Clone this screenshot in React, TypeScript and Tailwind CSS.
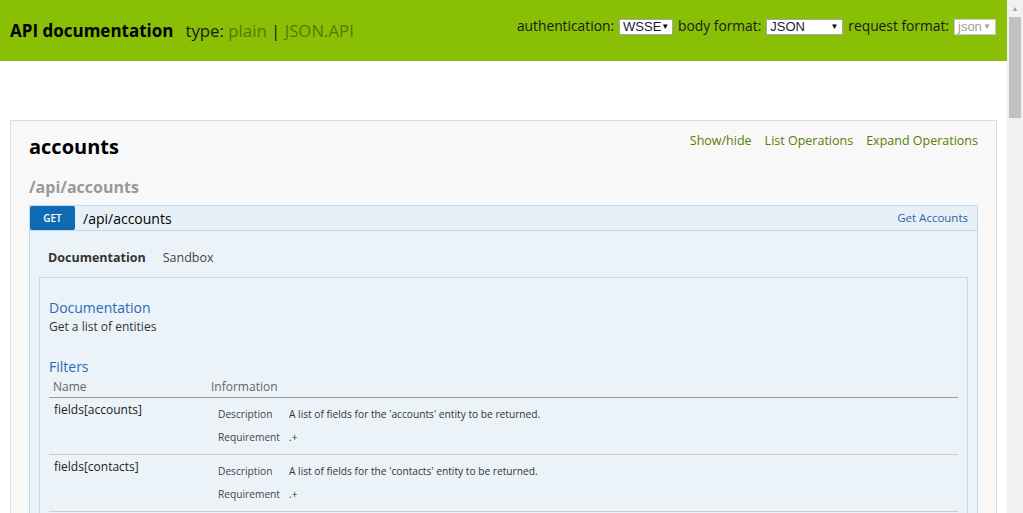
import React from 'react';

type Filter = { name: string; description: string; requirement: string };

const filters: Filter[] = [
  { name: 'fields[accounts]', description: "A list of fields for the 'accounts' entity to be returned.", requirement: '.+' },
  { name: 'fields[contacts]', description: "A list of fields for the 'contacts' entity to be returned.", requirement: '.+' },
];

function FakeSelect({ value, width, disabled }: { value: string; width: string; disabled?: boolean }) {
  return (
    <span
      className={`inline-flex h-[16px] items-center justify-between border bg-white pl-[3px] pr-[4px] font-['Liberation_Sans',Arial,sans-serif] text-[13px] leading-none ${width} ${
        disabled ? 'border-[#c8c8c8] text-[#a0a0a0]' : 'border-[#a6a6a6] text-[#1a1a40]'
      }`}
    >
      <span>{value}</span>
      <span className={`text-[8px] ${disabled ? 'text-[#a0a0a0]' : 'text-black'}`}>▼</span>
    </span>
  );
}

export default function App() {
  return (
    <div className="flex h-[513px] overflow-hidden bg-white font-['Open_Sans',sans-serif] text-[#333]">
      <div className="w-[1007px] shrink-0 overflow-hidden">
        {/* Header */}
        <header className="flex h-[61px] items-center justify-between bg-[#89bf04] pl-[10px] pr-[11px]">
          <div className="flex items-baseline gap-[12px]">
            <h1 className="text-[17px] font-bold text-black">API documentation</h1>
            <div className="text-[16.8px] text-[#1a1a1a]">
              type: <span className="text-[#557a00]">plain</span> | <span className="text-[#557a00]">JSON.API</span>
            </div>
          </div>
          <div className="flex items-center gap-[5px] pb-[8px] text-[13.8px] text-[#1a1a1a]">
            <span>authentication:</span>
            <FakeSelect value="WSSE" width="w-[54px]" />
            <span>body format:</span>
            <FakeSelect value="JSON" width="w-[77px]" />
            <span>request format:</span>
            <FakeSelect value="json" width="w-[42px]" disabled />
          </div>
        </header>

        {/* Resource */}
        <section className="mx-[10px] mt-[59px] border border-[#ddd] bg-[#f8f8f8] px-[18px] pt-[12px]">
          <div className="flex items-start justify-between">
            <h2 className="text-[20px] font-bold leading-[28px] text-black">accounts</h2>
            <ul className="flex gap-[13px] text-[12.5px] leading-[16px] text-[#5a7d00]">
              <li>Show/hide</li>
              <li>List Operations</li>
              <li>Expand Operations</li>
            </ul>
          </div>
          <h3 className="mt-[14px] text-[16px] font-bold leading-[24px] text-[#999]">/api/accounts</h3>

          {/* Operation */}
          <div className="mt-[6px]">
            <div className="flex h-[26px] items-center border border-[#c3d9ec] bg-[#e7f0f7]">
              <span className="flex h-[24px] w-[45px] items-center justify-center rounded-[2px] bg-[#0f6ab4] text-[10px] font-semibold text-white">
                GET
              </span>
              <span className="ml-[8px] text-[14px] text-black">/api/accounts</span>
              <span className="ml-auto pr-[9px] text-[11.5px] text-[#2a64a8]">Get Accounts</span>
            </div>
            <div className="border border-t-0 border-[#c3d9ec] bg-[#ebf3f9] px-[9px] pb-[20px]">
              <div className="flex gap-[17px] pl-[9px] pt-[17px] pb-[9px] text-[12.5px] leading-[20px]">
                <span className="font-bold text-[#333]">Documentation</span>
                <span className="text-[#444]">Sandbox</span>
              </div>
              <div className="border border-[#c3d9ec] px-[9px] pt-[20px] pb-[20px]">
                <h4 className="text-[14px] leading-[20px] text-[#2a6ab4]">Documentation</h4>
                <p className="text-[12px] leading-[18px] text-[#333]">Get a list of entities</p>

                <h4 className="mt-[21px] text-[14px] leading-[20px] text-[#2a6ab4]">Filters</h4>
                <table className="w-full border-collapse text-[12px]">
                  <thead>
                    <tr className="border-b border-[#999]">
                      <th className="w-[162px] px-[4px] py-0 pb-[1px] text-left font-normal leading-[19px] text-[#666]">Name</th>
                      <th className="px-[0px] pb-[1px] text-left font-normal leading-[19px] text-[#666]">Information</th>
                    </tr>
                  </thead>
                  <tbody>
                    {filters.map(f => (
                      <tr key={f.name} className="border-b border-[#ccc] align-top">
                        <td className="px-[5px] pt-[3px] leading-[18px] text-[#222]">{f.name}</td>
                        <td className="pt-[10px] pb-[10px]">
                          <table className="border-collapse text-[10.2px] leading-[13px]">
                            <tbody>
                              <tr>
                                <td className="w-[78px] pl-[7px] pb-[10px] text-[#444]">Description</td>
                                <td className="pb-[10px] text-[#333]">{f.description}</td>
                              </tr>
                              <tr>
                                <td className="pl-[7px] text-[#444]">Requirement</td>
                                <td className="text-[#333]">{f.requirement}</td>
                              </tr>
                            </tbody>
                          </table>
                        </td>
                      </tr>
                    ))}
                  </tbody>
                </table>
              </div>
            </div>
          </div>
        </section>
      </div>

      {/* Scrollbar */}
      <div className="flex w-[16px] shrink-0 flex-col bg-[#f1f1f1]">
        <div className="flex h-[17px] items-center justify-center text-[7px] leading-none text-[#a3a3a3]">▲</div>
        <div className="mx-[2px] h-[101px] bg-[#c1c1c1]" />
      </div>
    </div>
  );
}
